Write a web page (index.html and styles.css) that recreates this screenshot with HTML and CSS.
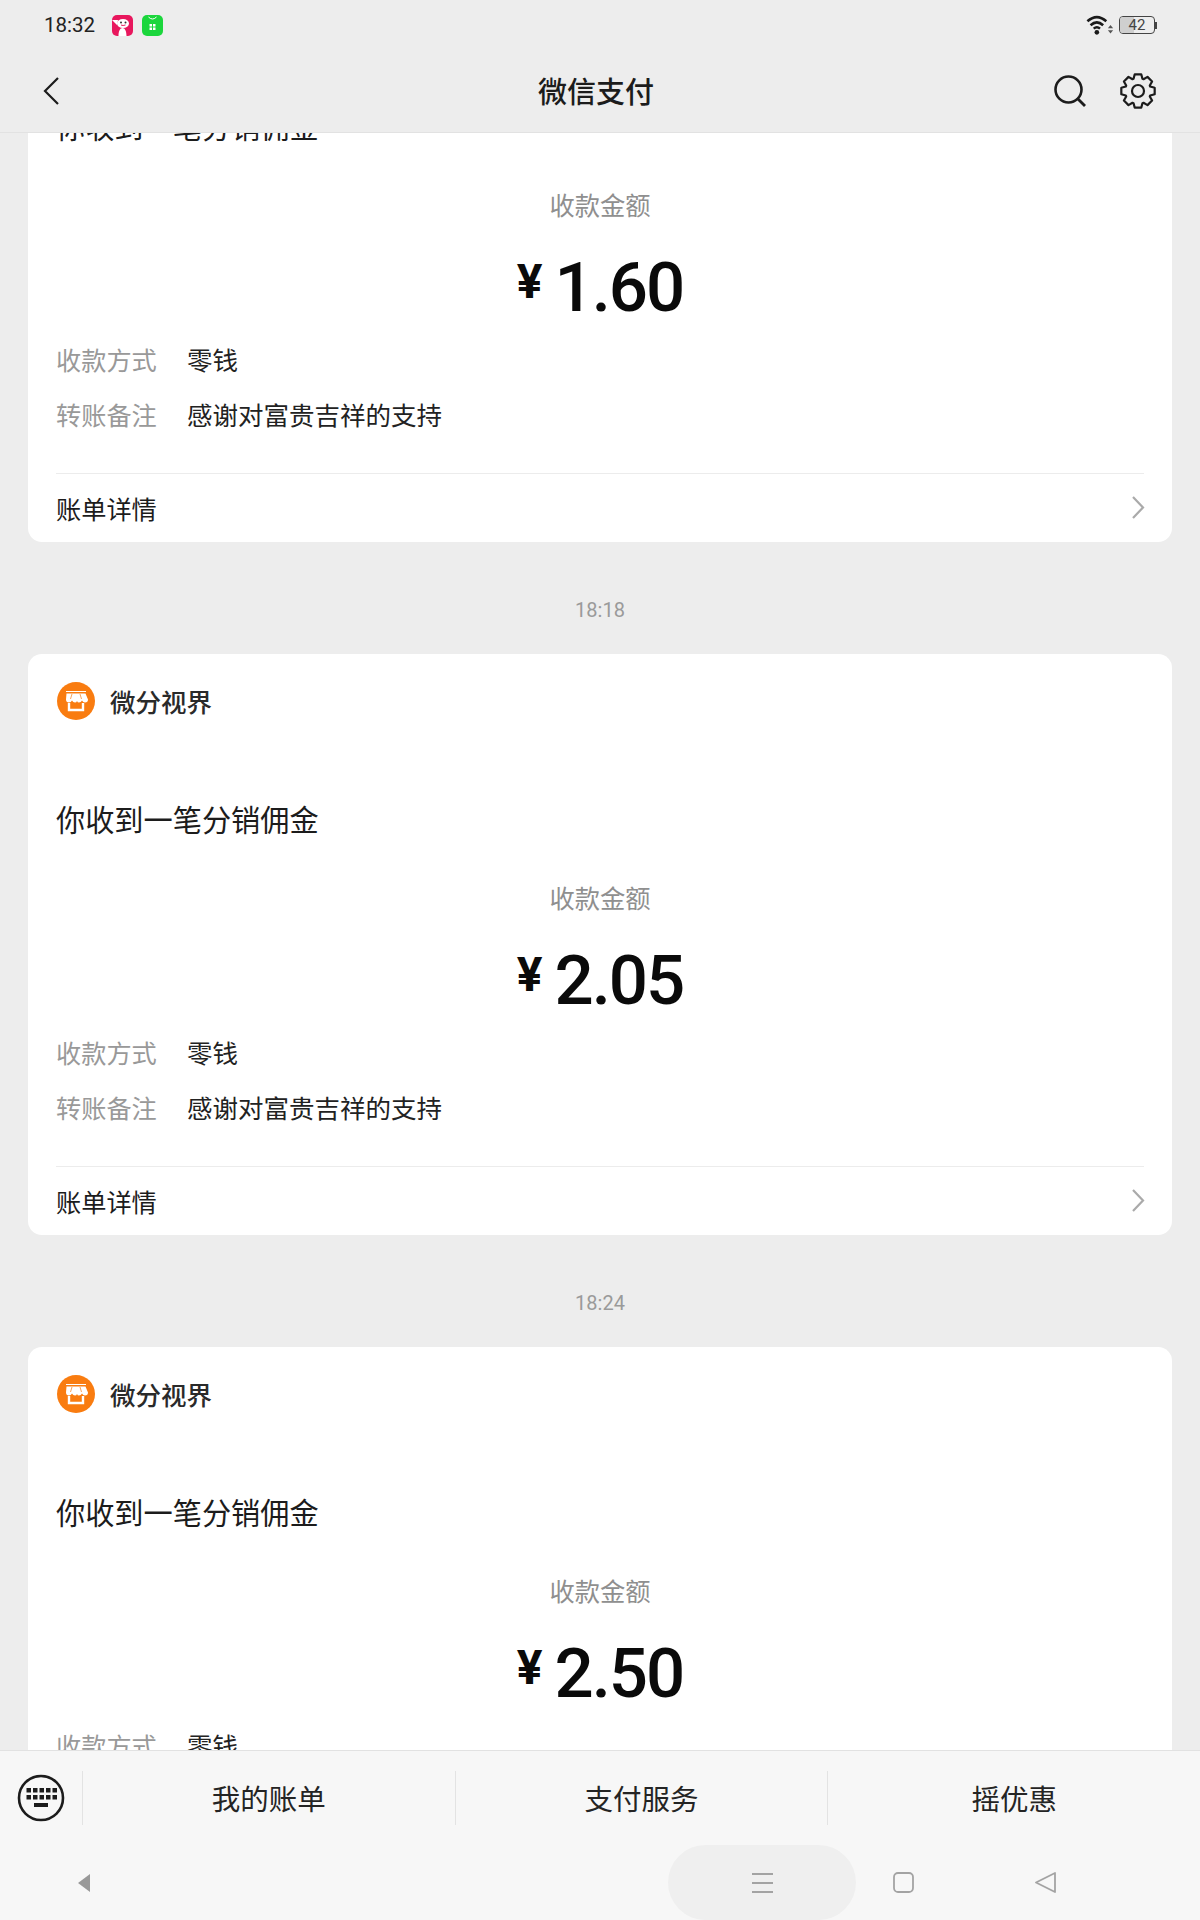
FILE: index.html
```html
<!DOCTYPE html>
<html lang="zh">
<head>
<meta charset="utf-8">
<title>微信支付</title>
<link rel="stylesheet" href="styles.css">
</head>
<body>
<div class="page">
  <header class="top">
    <div class="status">
      <span class="clock">18:32</span>
      <svg class="app" viewBox="0 0 21 21"><rect width="21" height="21" rx="5" fill="#e8175d"/><ellipse cx="11" cy="8.500" rx="6" ry="4.500" fill="#fff"/><path d="M0 5l6 0-1 5zM6.500 21c0-5 1.500-8 4-8s4 3 4 8z" fill="#fff"/><circle cx="9" cy="7.500" r="1" fill="#333"/><circle cx="13.500" cy="7.500" r="1" fill="#333"/><path d="M9 10q2 1 4.500 0" stroke="#e8175d" fill="none"/></svg>
      <svg class="app" viewBox="0 0 21 21"><rect width="21" height="21" rx="5" fill="#1bd63c"/><path d="M6.500 2q4 4 8 0" stroke="#fff" stroke-width="1" fill="none"/><path d="M7.500 9h2.500v2.500H7.500zM11 9h2.500v2.500H11zM7.500 12.500h2.500V15H7.500zM11 12.500h2.500V15H11z" fill="#fff"/></svg>
      <span class="spring"></span>
      <svg class="wifi" viewBox="0 0 26 20"><g fill="none" stroke="#1a1a1a" stroke-width="2.400"><path d="M1 6Q10-2 19 6"/><path d="M4 9.800Q10 4.200 16 9.800"/><path d="M7 13Q10 10.400 13 13"/></g><circle cx="10" cy="16.500" r="2.200" fill="#1a1a1a"/><path d="M20.500 12.500h5l-2.500-3zM20.500 14.500h5l-2.500 3z" fill="#555"/></svg>
      <span class="battery"><span class="level"></span><span class="pct">42</span></span>
      <span class="cap"></span>
    </div>
    <div class="nav">
      <svg class="back" viewBox="0 0 16 28"><path d="M15 1L2 14l13 13" fill="none" stroke="#1c1c1c" stroke-width="2.200"/></svg>
      <h1 class="title">微信支付</h1>
      <div class="tools">
        <svg class="search" viewBox="0 0 32 32"><circle cx="14.500" cy="14.500" r="13" fill="none" stroke="#1c1c1c" stroke-width="2.600"/><path d="M24 24l7 7" stroke="#1c1c1c" stroke-width="2.800"/></svg>
        <svg class="gear" viewBox="0 0 36 36"><g fill="none" stroke="#1c1c1c" stroke-width="2.200" stroke-linejoin="round"><path d="M13.550 5.800L14.760 1.320H21.240L22.450 5.800L23.500 6.200L27.500 3.900L32.100 8.500L29.800 12.500L30.200 13.550L34.680 14.760V21.240L30.200 22.450L29.800 23.500L32.100 27.500L27.500 32.100L23.500 29.800L22.450 30.200L21.240 34.680H14.760L13.550 30.200L12.500 29.800L8.500 32.100L3.900 27.500L6.200 23.500L5.800 22.450L1.320 21.240V14.760L5.800 13.550L6.200 12.500L3.900 8.500L8.500 3.900L12.500 6.200Z"/><circle cx="18" cy="18" r="6"/></g></svg>
      </div>
    </div>
  </header>

  <main class="feed">
    <div class="scroll">
      <article class="card">
        <div class="source"><svg class="shop" viewBox="0 0 38 38"><circle cx="19" cy="19" r="19" fill="#f97c10"/><path d="M9 9h20v1H9z" fill="#fff"/><path d="M9.500 11.500h19l2.500 6q0 3-3 3-2 0-3-2-1 2-3 2-1.500 0-2-1.500-.5 1.500-2 1.500-2 0-3-2-1 2-3 2-3 0-3-3z" fill="#fff"/><path d="M12 21v7h14v-7" fill="none" stroke="#fff" stroke-width="2.400"/><path d="M15 12l-1.500 5M23 12l1.500 5" stroke="#f9a55c" stroke-width="1"/></svg><span>微分视界</span></div>
        <h2 class="headline">你收到一笔分销佣金</h2>
        <p class="caption">收款金额</p>
        <p class="amount"><span class="yen">¥</span><span>1.60</span></p>
        <dl class="row"><dt>收款方式</dt><dd>零钱</dd></dl>
        <dl class="row"><dt>转账备注</dt><dd>感谢对富贵吉祥的支持</dd></dl>
        <div class="detail"><span>账单详情</span><svg class="chev" viewBox="0 0 13 23"><path d="M1 1l10 10.500L1 22" fill="none" stroke="#aaa" stroke-width="2.200"/></svg></div>
      </article>
      <div class="stamp">18:18</div>
      <article class="card">
        <div class="source"><svg class="shop" viewBox="0 0 38 38"><circle cx="19" cy="19" r="19" fill="#f97c10"/><path d="M9 9h20v1H9z" fill="#fff"/><path d="M9.500 11.500h19l2.500 6q0 3-3 3-2 0-3-2-1 2-3 2-1.500 0-2-1.500-.5 1.500-2 1.500-2 0-3-2-1 2-3 2-3 0-3-3z" fill="#fff"/><path d="M12 21v7h14v-7" fill="none" stroke="#fff" stroke-width="2.400"/><path d="M15 12l-1.500 5M23 12l1.500 5" stroke="#f9a55c" stroke-width="1"/></svg><span>微分视界</span></div>
        <h2 class="headline">你收到一笔分销佣金</h2>
        <p class="caption">收款金额</p>
        <p class="amount"><span class="yen">¥</span><span>2.05</span></p>
        <dl class="row"><dt>收款方式</dt><dd>零钱</dd></dl>
        <dl class="row"><dt>转账备注</dt><dd>感谢对富贵吉祥的支持</dd></dl>
        <div class="detail"><span>账单详情</span><svg class="chev" viewBox="0 0 13 23"><path d="M1 1l10 10.500L1 22" fill="none" stroke="#aaa" stroke-width="2.200"/></svg></div>
      </article>
      <div class="stamp">18:24</div>
      <article class="card">
        <div class="source"><svg class="shop" viewBox="0 0 38 38"><circle cx="19" cy="19" r="19" fill="#f97c10"/><path d="M9 9h20v1H9z" fill="#fff"/><path d="M9.500 11.500h19l2.500 6q0 3-3 3-2 0-3-2-1 2-3 2-1.500 0-2-1.500-.5 1.500-2 1.500-2 0-3-2-1 2-3 2-3 0-3-3z" fill="#fff"/><path d="M12 21v7h14v-7" fill="none" stroke="#fff" stroke-width="2.400"/><path d="M15 12l-1.500 5M23 12l1.500 5" stroke="#f9a55c" stroke-width="1"/></svg><span>微分视界</span></div>
        <h2 class="headline">你收到一笔分销佣金</h2>
        <p class="caption">收款金额</p>
        <p class="amount"><span class="yen">¥</span><span>2.50</span></p>
        <dl class="row"><dt>收款方式</dt><dd>零钱</dd></dl>
      </article>
    </div>
  </main>

  <footer class="bottom">
    <div class="menu">
      <div class="kbd"><svg viewBox="0 0 48 48"><circle cx="24" cy="24" r="22" fill="none" stroke="#1c1c1c" stroke-width="2.600"/><path d="M9.500 14h4.500v4.500H9.500zM16 14h4.500v4.500H16zM22.500 14H27v4.500h-4.500zM29 14h4.500v4.500H29zM35.500 14H40v4.500h-4.500zM9.500 21h4.500v4.500H9.500zM16 21h4.500v4.500H16zM22.500 21H27v4.500h-4.500zM29 21h4.500v4.500H29zM35.500 21H40v4.500h-4.500zM17 29h14v4H17z" fill="#1c1c1c"/></svg></div>
      <div class="tab"><span>我的账单</span></div>
      <div class="tab"><span>支付服务</span></div>
      <div class="tab"><span>摇优惠</span></div>
    </div>
    <div class="sysbar">
      <svg class="sys-back" viewBox="0 0 13 18"><path d="M12 0v18L0 9z" fill="#999"/></svg>
      <div class="pill"><svg class="lines" viewBox="0 0 21 20"><path d="M0 1h21M0 10h21M0 19h21" stroke="#a3a3a3" stroke-width="1.800"/></svg></div>
      <svg class="sys-home" viewBox="0 0 21 21"><rect x="1" y="1" width="19" height="19" rx="4" fill="none" stroke="#a3a3a3" stroke-width="1.800"/></svg>
      <svg class="sys-tri" viewBox="0 0 21 21"><path d="M20 1v19L1 10.500z" fill="none" stroke="#a3a3a3" stroke-width="1.800" stroke-linejoin="round"/></svg>
    </div>
  </footer>
</div>
</body>
</html>
```

FILE: styles.css
```css
* { box-sizing: border-box; }
html, body { margin: 0; padding: 0; }
body {
  background: #ededed;
  font-family: "Noto Sans CJK SC", "Noto Sans", sans-serif;
  color: #1a1a1a;
}
h1, h2, p, dl, dd { margin: 0; font-weight: 400; }

.page { width: 1200px; height: 1920px; display: flex; flex-direction: column; overflow: hidden; }

.top { height: 133px; flex: none; background: #ededed; border-bottom: 1px solid #e2e2e2; position: relative; z-index: 1; }
.status { height: 50px; display: flex; align-items: center; padding: 0 43px 0 44px; }
.clock { font-family: Roboto, sans-serif; font-size: 20.500px; color: #222; width: 68px; }
.app { width: 21px; height: 21px; margin-right: 9px; }
.spring { flex: 1; }
.wifi { width: 28px; height: 21px; margin-right: 5px; }
.battery { width: 36px; height: 18px; border: 1.500px solid #444; border-radius: 4px; position: relative; display: flex; align-items: center; justify-content: center; overflow: hidden; }
.level { position: absolute; left: 0; top: 0; bottom: 0; width: 42%; background: #cfcfcf; }
.pct { position: relative; font-family: Roboto, sans-serif; font-size: 15px; color: #444; }
.cap { width: 2px; height: 7px; background: #444; }

.nav { height: 82px; display: flex; align-items: center; padding: 0 44px 0 43px; position: relative; }
.back { width: 16px; height: 28px; }
.title { position: absolute; left: 0; right: 8px; text-align: center; font-size: 29px; font-weight: 500; line-height: 40px; color: #1c1c1c; pointer-events: none; top: 20px; }
.tools { margin-left: auto; display: flex; align-items: center; gap: 35px; }
.search { width: 32px; height: 32px; margin-right: -1px; }
.gear { width: 36px; height: 36px; margin-top: -1px; }

.feed { flex: 1; min-height: 0; overflow: hidden; }
.scroll { margin-top: -172px; padding: 0 28px; }

.card { height: 581px; background: #fff; border-radius: 14px; padding: 0 28px; }
.source { height: 94px; display: flex; align-items: center; gap: 15px; font-size: 25.500px; font-weight: 500; color: #2a2a2a; }
.source span { margin-top: -1px; }
.shop { width: 38px; height: 38px; margin-left: 1px; }
.headline { margin-top: 48px; font-size: 29.200px; line-height: 44px; color: #1c1c1c; }
.caption { margin-top: 39px; text-align: center; font-size: 25.300px; line-height: 36px; color: #8f8f8f; }
.amount { margin-top: 21px; height: 89px; display: flex; justify-content: center; align-items: center; font-family: Roboto, sans-serif; font-weight: 500; font-size: 69px; line-height: 89px; color: #0a0a0a; letter-spacing: -2px; }
.yen { font-size: 48px; font-weight: 700; margin-right: 12px; margin-top: -12px; letter-spacing: 0; }
.row { height: 55px; display: flex; align-items: center; font-size: 25.500px; }
.row dt { width: 131px; font-size: 25.200px; color: #999; margin-top: -2px; }
.row dd { color: #222; margin-top: -2px; }
.detail { margin-top: 31px; height: 68px; border-top: 1px solid #ececec; display: flex; align-items: center; justify-content: space-between; font-size: 25.200px; color: #1c1c1c; }
.chev { width: 13px; height: 23px; margin-right: -1px; }

.stamp { height: 112px; padding-top: 53px; text-align: center; font-family: Roboto, sans-serif; font-size: 20px; line-height: 30px; color: #9a9a9a; }

.bottom { flex: none; height: 170px; background: #f7f7f7; border-top: 1px solid #e2e2e2; position: relative; z-index: 1; }
.menu { height: 94px; display: flex; align-items: center; }
.kbd { width: 82px; flex: none; display: flex; justify-content: center; }
.kbd svg { width: 48px; height: 48px; }
.tab { flex: 1; height: 54px; display: flex; align-items: center; justify-content: center; font-size: 28.500px; color: #242424; border-left: 1px solid #e3e3e3; }
.tab span { margin-top: -2px; }
.sysbar { height: 75px; display: flex; align-items: center; padding-left: 78px; }
.sys-back { width: 13px; height: 18px; margin-right: 577px; }
.pill { width: 188px; height: 75px; border-radius: 38px; background: #efefef; display: flex; align-items: center; justify-content: center; }
.lines { width: 21px; height: 20px; }
.sys-home { width: 21px; height: 21px; margin-left: 37px; }
.sys-tri { width: 21px; height: 21px; margin-left: 121px; }
```
